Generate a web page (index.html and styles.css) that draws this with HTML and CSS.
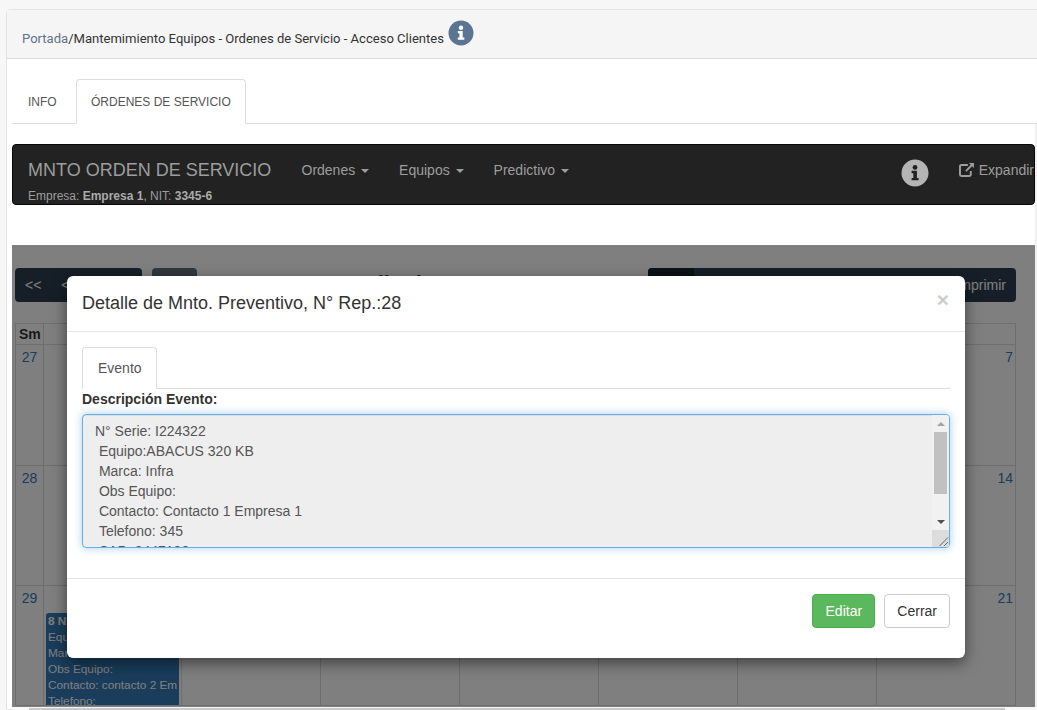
FILE: index.html
```html
<!DOCTYPE html>
<html lang="en">
<head>
  <meta charset="UTF-8" />
  <title>Mantemimiento Equipos</title>
  <link rel="stylesheet" href="styles.css">
</head>
<body>

  <div class="panel">
    <div class="panel-heading">
      <a class="crumb-link">Portada</a>/Mantemimiento Equipos - Ordenes de Servicio - Acceso Clientes
      <span class="info-badge">
        <svg viewBox="0 0 26 26" width="26" height="26"><circle cx="13" cy="13" r="12.5" fill="#5a7492"/><circle cx="13" cy="7.8" r="2.2" fill="#fff"/><path d="M9.8 11h4.9v6.6h1.6v2.2H9.8v-2.2h1.6v-4.4H9.8z" fill="#fff"/></svg>
      </span>
    </div>

    <div class="panel-body">
      <ul class="tabs">
        <li class="tab">INFO</li>
        <li class="tab active">ÓRDENES DE SERVICIO</li>
      </ul>

      <nav class="navbar">
        <div class="brand-block">
          <div class="brand">MNTO ORDEN DE SERVICIO</div>
          <div class="company">Empresa: <b>Empresa 1</b>, NIT: <b>3345-6</b></div>
        </div>
        <ul class="nav-menu">
          <li>Ordenes <span class="caret"></span></li>
          <li>Equipos <span class="caret"></span></li>
          <li>Predictivo <span class="caret"></span></li>
        </ul>
        <div class="nav-right">
          <svg class="nav-info" viewBox="0 0 28 28" width="28" height="28"><circle cx="14" cy="14" r="13.5" fill="#b5b5b5"/><circle cx="14" cy="8.4" r="2.4" fill="#222"/><path d="M10.6 11.8h5.3v7.1h1.7v2.4h-7v-2.4h1.7v-4.7h-1.7z" fill="#222"/></svg>
          <span class="expand">
            <svg viewBox="0 0 16 16" width="16" height="16"><path d="M12 9v3.6a1.4 1.4 0 0 1-1.4 1.4H2.4A1.4 1.4 0 0 1 1 12.6V4.4A1.4 1.4 0 0 1 2.4 3H9" fill="none" stroke="#9d9d9d" stroke-width="2"/><path d="M10 .8h5.2V6l-1.9-1.9-5.6 5.7-1.4-1.4 5.6-5.7z" fill="#9d9d9d"/></svg>
            Expandir
          </span>
        </div>
      </nav>

      <div class="calendar-area">
        <div class="toolbar">
          <div class="btn-group left-group"><span>&lt;&lt;</span><span>&lt;</span></div>
          <div class="btn-today"></div>
          <h2 class="month">Julio de 2018</h2>
          <div class="btn-group right-group"><span class="first"></span><span class="print">Imprimir</span></div>
        </div>

        <div class="calendar">
          <div class="cal-head">Sm</div><div class="cal-head"></div><div class="cal-head"></div><div class="cal-head"></div><div class="cal-head"></div><div class="cal-head"></div><div class="cal-head"></div><div class="cal-head"></div>

          <div class="cal-wk">27</div><div class="cal-day"></div><div class="cal-day"></div><div class="cal-day"></div><div class="cal-day"></div><div class="cal-day"></div><div class="cal-day"></div><div class="cal-day">7</div>

          <div class="cal-wk">28</div><div class="cal-day"></div><div class="cal-day"></div><div class="cal-day"></div><div class="cal-day"></div><div class="cal-day"></div><div class="cal-day"></div><div class="cal-day">14</div>

          <div class="cal-wk">29</div>
          <div class="cal-day">
            <div class="event"><b>8 N° Serie: I224322</b><br>Equipo:ABACUS<br>Marca: Infra<br>Obs Equipo:<br>Contacto: contacto 2 Em<br>Telefono:</div>
          </div>
          <div class="cal-day"></div><div class="cal-day"></div><div class="cal-day"></div><div class="cal-day"></div><div class="cal-day"></div><div class="cal-day">21</div>
        </div>

        <div class="overlay"></div>
      </div>
    </div>
  </div>

  <div class="modal">
    <div class="modal-header">
      <h4>Detalle de Mnto. Preventivo, N° Rep.:28</h4>
      <span class="close">×</span>
    </div>
    <div class="modal-body">
      <div class="modal-tabs"><span class="modal-tab">Evento</span></div>
      <label for="desc">Descripción Evento:</label>
      <div class="textarea-wrap">
        <textarea id="desc" readonly>N° Serie: I224322
 Equipo:ABACUS 320 KB
 Marca: Infra
 Obs Equipo:
 Contacto: Contacto 1 Empresa 1
 Telefono: 345
 SAP: 3447192
 Observaciones:</textarea>
        <div class="scrollbar">
          <div class="scroll-btn"><span class="arrow-up"></span></div>
          <div class="scroll-track"><div class="scroll-thumb"></div></div>
          <div class="scroll-btn"><span class="arrow-down"></span></div>
          <div class="scroll-corner">
            <svg viewBox="0 0 17 17" width="17" height="17"><path d="M7.5 16 16 7.5M12 16l4-4" stroke="#666" fill="none"/></svg>
          </div>
        </div>
      </div>
    </div>
    <div class="modal-footer">
      <button class="btn-edit">Editar</button>
      <button class="btn-close">Cerrar</button>
    </div>
  </div>

  <div class="vscroll"></div>
  <div class="hscroll"><div class="hscroll-thumb"></div></div>

</body>
</html>
```

FILE: styles.css
```css
* {
  box-sizing: border-box;
  margin: 0;
  padding: 0;
}

html, body {
  height: 710px;
  overflow: hidden;
}

body {
  background: #f7f7f7;
  font-family: 'Liberation Sans', sans-serif;
  font-size: 14px;
  color: #333;
  padding: 9px 0 0 6px;
  position: relative;
}

.panel {
  width: 1040px;
  height: 701px;
  background: white;
  border: 1px solid #e4e4e4;
  border-radius: 4px 0 0 0;
}

.panel-heading {
  height: 49px;
  background: #f5f5f5;
  border-bottom: 1px solid #ddd;
  padding: 19px 0 0 15px;
  font-family: 'Roboto', sans-serif;
  font-size: 13.06px;
  line-height: 20px;
  color: #333;
  position: relative;
}

.crumb-link {
  color: #5f7488;
}

.info-badge {
  position: absolute;
  left: 441px;
  top: 10px;
}

.panel-body {
  padding: 20px 0 0 5px;
}

.tabs {
  list-style: none;
  display: flex;
  height: 45px;
  border-bottom: 1px solid #ddd;
}

.tab {
  padding: 15px 17.3px 0 16px;
  font-size: 12px;
  line-height: 17px;
  color: #555;
  height: 45px;
  margin-right: 2px;
}

.tab.active {
  background: white;
  border: 1px solid #ddd;
  border-bottom-color: white;
  border-radius: 4px 4px 0 0;
  padding: 14px 14px 0;
}

.navbar {
  display: flex;
  width: 1023px;
  height: 61px;
  margin-top: 20px;
  background: #222;
  border: 1px solid #080808;
  border-radius: 4px;
  color: #9d9d9d;
  overflow: hidden;
}

.brand-block {
  padding: 14px 0 0 15px;
  width: 274px;
}

.brand {
  font-size: 18px;
  line-height: 22px;
  white-space: nowrap;
}

.company {
  font-size: 12px;
  line-height: 14px;
  margin-top: 8px;
  white-space: nowrap;
}

.company b {
  color: #aaa;
}

.nav-menu {
  list-style: none;
  display: flex;
  gap: 30px;
  padding: 16px 0 0 14.5px;
  font-size: 14px;
  line-height: 18px;
}

.caret {
  display: inline-block;
  width: 0;
  height: 0;
  margin-left: 2px;
  vertical-align: middle;
  border-top: 4px solid #9d9d9d;
  border-left: 4px solid transparent;
  border-right: 4px solid transparent;
}

.nav-right {
  margin-left: auto;
  display: flex;
  gap: 30px;
  padding: 14px 0 0 0;
  align-items: flex-start;
}

.nav-info {
  flex: none;
}

.expand {
  display: flex;
  gap: 4px;
  font-size: 14px;
  line-height: 20px;
  width: 75px;
  margin-top: 1px;
  white-space: nowrap;
  align-items: center;
}

.calendar-area {
  position: relative;
  width: 1023px;
  height: 462px;
  margin-top: 40px;
  padding: 23px 3px 0;
}

.toolbar {
  display: flex;
  height: 34px;
  align-items: flex-start;
}

.btn-group {
  display: flex;
  height: 34px;
  background: #2c3e50;
  border-radius: 4px;
  color: #fff;
  line-height: 34px;
}

.left-group {
  width: 127px;
  padding-left: 10px;
  gap: 20px;
}

.btn-today {
  width: 45px;
  height: 34px;
  margin-left: 10px;
  background: #63707d;
  border-radius: 4px;
}

.month {
  width: 451px;
  padding-right: 5px;
  text-align: center;
  font-size: 21.4px;
  font-weight: bold;
  line-height: 32px;
}

.right-group {
  width: 368px;
  overflow: hidden;
}

.right-group .first {
  width: 46px;
  background: #1a252f;
}

.right-group .print {
  margin-left: auto;
  padding-right: 10px;
}

.calendar {
  display: grid;
  grid-template-columns: 28px 138px repeat(6, 139px);
  grid-template-rows: 21px 121px 120px 120px;
  width: 1001px;
  margin-top: 21px;
  border-top: 1px solid #ddd;
  border-left: 1px solid #ddd;
}

.cal-head {
  border-right: 1px solid #ddd;
  border-bottom: 1px solid #ddd;
  font-weight: bold;
  line-height: 20px;
  padding-left: 3px;
}

.cal-wk, .cal-day {
  border-right: 1px solid #ddd;
  border-bottom: 1px solid #ddd;
  color: #337ab7;
  line-height: 20px;
  padding-top: 2px;
}

.cal-wk {
  text-align: center;
}

.cal-day {
  text-align: right;
  padding-right: 2px;
  position: relative;
  overflow: hidden;
}

.event {
  position: absolute;
  left: 2px;
  top: 27px;
  width: 133px;
  height: 93px;
  padding: 0 2px;
  background: #337ab7;
  border-radius: 3px 3px 0 0;
  color: #fff;
  text-align: left;
  font-size: 11.8px;
  line-height: 16px;
  white-space: nowrap;
  overflow: hidden;
}

.overlay {
  position: absolute;
  inset: 0;
  background: rgba(0, 0, 0, 0.5);
}

.modal {
  position: absolute;
  left: 67px;
  top: 276px;
  width: 898px;
  height: 382px;
  background: white;
  border-radius: 6px;
  box-shadow: 0 5px 15px rgba(0, 0, 0, 0.5);
}

.modal-header {
  height: 56px;
  border-bottom: 1px solid #e5e5e5;
  padding: 15px 16px 15px 15px;
  display: flex;
  justify-content: space-between;
}

.modal-header h4 {
  font-size: 18px;
  font-weight: normal;
  line-height: 25px;
}

.close {
  font-size: 21px;
  font-weight: bold;
  color: #000;
  opacity: 0.2;
  line-height: 17px;
}

.modal-body {
  height: 246px;
  padding: 15px;
}

.modal-tabs {
  height: 42px;
  border-bottom: 1px solid #ddd;
}

.modal-tab {
  display: inline-block;
  height: 42px;
  padding: 10px 14px 10px 15px;
  line-height: 20px;
  color: #555;
  background: white;
  border: 1px solid #ddd;
  border-bottom-color: white;
  border-radius: 4px 4px 0 0;
}

label {
  display: block;
  font-weight: bold;
  line-height: 20px;
  margin-bottom: 5px;
}

.textarea-wrap {
  position: relative;
  width: 868px;
  height: 134px;
}

textarea {
  display: block;
  width: 868px;
  height: 134px;
  padding: 6px 12px;
  background: #eee;
  border: 1px solid #66afe9;
  border-radius: 4px;
  box-shadow: inset 0 1px 1px rgba(0, 0, 0, .075), 0 0 8px rgba(102, 175, 233, .6);
  outline: none;
  resize: none;
  font-family: 'Liberation Sans', sans-serif;
  font-size: 14px;
  line-height: 20px;
  color: #555;
  overflow: hidden;
}

.scrollbar {
  position: absolute;
  top: 1px;
  right: 1px;
  bottom: 1px;
  width: 17px;
  display: flex;
  flex-direction: column;
  background: #f1f1f1;
  border-radius: 0 3px 3px 0;
  overflow: hidden;
}

.scroll-btn {
  height: 17px;
  display: flex;
  align-items: center;
  justify-content: center;
}

.arrow-up, .arrow-down {
  width: 0;
  height: 0;
  border-left: 4px solid transparent;
  border-right: 4px solid transparent;
}

.arrow-up {
  border-bottom: 4px solid #a3a3a3;
}

.arrow-down {
  border-top: 4px solid #505050;
}

.scroll-track {
  flex: 1;
  padding: 0 2px;
}

.scroll-thumb {
  height: 62px;
  background: #c1c1c1;
}

.scroll-corner {
  height: 17px;
  background: #dcdcdc;
}

.scroll-corner svg {
  display: block;
}

.modal-footer {
  height: 80px;
  border-top: 1px solid #e5e5e5;
  padding: 15px;
  display: flex;
  justify-content: flex-end;
  gap: 9px;
}

.modal-footer button {
  height: 34px;
  padding: 6px 12px;
  font-family: 'Liberation Sans', sans-serif;
  font-size: 14px;
  line-height: 20px;
  border-radius: 4px;
  border: 1px solid #ccc;
}

.modal-footer .btn-edit {
  width: 63px;
  background: #5cb85c;
  border-color: #4cae4c;
  color: white;
}

.btn-close {
  background: white;
  color: #333;
}

.vscroll {
  position: absolute;
  right: 0;
  top: 124px;
  width: 2px;
  height: 586px;
  background: #f1f1f1;
}

.hscroll {
  position: absolute;
  left: 12px;
  right: 0;
  top: 707px;
  height: 3px;
  background: #f7f7f7;
  padding-left: 17px;
  padding-right: 32px;
}

.hscroll-thumb {
  height: 2px;
  margin-top: 1px;
  background: #c8c8c8;
}
```
